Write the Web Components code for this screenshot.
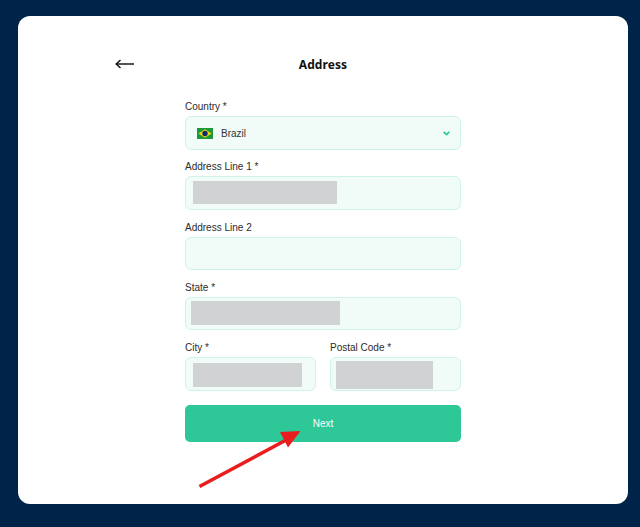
<!DOCTYPE html>
<html><head><meta charset="utf-8">
<style>
html,body{margin:0;height:100%;background:#00234a}
body{font-family:"Liberation Sans",Arial,sans-serif;overflow:hidden}
form-field.gap{margin-bottom:10.750px}
</style></head><body>
<address-page>
  <form-field class="gap" label="Country *"><country-select name="Brazil"></country-select></form-field>
  <form-field class="gap" label="Address Line 1 *"><text-box redact="8.500,5,144,23"></text-box></form-field>
  <form-field class="gap" label="Address Line 2"><text-box></text-box></form-field>
  <form-field class="gap" label="State *"><text-box redact="6.500,4.500,149,24"></text-box></form-field>
  <field-row>
    <form-field label="City *"><text-box redact="8.500,6,109,24"></text-box></form-field>
    <form-field label="Postal Code *"><text-box redact="6.500,4,97,28"></text-box></form-field>
  </field-row>
  <primary-button>Next</primary-button>
</address-page>
<script>
class AddressPage extends HTMLElement{constructor(){super();this.attachShadow({mode:'open'}).innerHTML=`
<style>
:host{display:block;box-sizing:border-box;height:100%;padding:16px 12px 23px 18px}
.card{position:relative;box-sizing:border-box;height:100%;background:#fff;border-radius:12px;padding:38px 0 0;display:flex;flex-direction:column;align-items:center}
header{position:relative;width:610px;display:flex;justify-content:center;height:22px;align-items:center}
h1{margin:0;font:700 12px/22px "Noto Sans",sans-serif;color:#111;letter-spacing:.1px}
.back{position:absolute;left:97px;top:3px;display:block}
main{width:276px;margin-top:24px;display:flex;flex-direction:column}
.arrow{position:absolute;left:178px;top:410px}
</style>
<div class="card">
<header><svg class="back" width="20" height="14" viewBox="0 0 20 14" fill="none" stroke="#1a1a1a"><path d="M1 7H19" stroke-width="1.500"/><path d="M5.500 3 1.200 7 5.500 11" stroke-width="1.500"/></svg><h1>Address</h1></header>
<main><slot></slot></main>
<svg class="arrow" width="112" height="72" viewBox="0 0 112 72"><path d="M3.500 60.500 92 13" stroke="#e81e1e" stroke-width="3.600" fill="none"/><path d="M84 6 104.500 5 92 21.500Z" fill="#e81e1e"/></svg>
</div>`}}
customElements.define('address-page',AddressPage);

class FormField extends HTMLElement{constructor(){super();this.attachShadow({mode:'open'}).innerHTML=`
<style>
:host{display:block;min-width:0}
label{display:block;font:400 10px/14px "Liberation Sans",Arial,sans-serif;color:#2b2b2b;margin-bottom:2px}
</style><label></label><slot></slot>`}
connectedCallback(){this.shadowRoot.querySelector('label').textContent=this.getAttribute('label')}}
customElements.define('form-field',FormField);

const boxCss=`:host{display:block;position:relative;box-sizing:border-box;height:33.500px;background:#f1fcf8;border:1.5px solid #cff3e8;border-radius:6px}`;

class TextBox extends HTMLElement{constructor(){super();this.attachShadow({mode:'open'}).innerHTML=`
<style>${boxCss}
.r{position:absolute;background:#d1d2d3}</style><div class="r" hidden></div>`}
connectedCallback(){const v=this.getAttribute('redact');if(!v)return;const [x,y,w,h]=v.split(',');const r=this.shadowRoot.querySelector('.r');r.hidden=false;r.style.cssText=`left:${x-1.5}px;top:${y-1.5}px;width:${w}px;height:${h}px`}}
customElements.define('text-box',TextBox);

class CountrySelect extends HTMLElement{constructor(){super();this.attachShadow({mode:'open'}).innerHTML=`
<style>${boxCss}
:host{display:flex;align-items:center;padding:1px 10px 0 10.500px;gap:8.500px;font:400 10px "Liberation Sans",Arial,sans-serif;color:#333}
span{flex:1}
</style>
<svg width="16" height="11" viewBox="0 0 16 11"><rect width="16" height="11" fill="#1c9a3a"/><path d="M8 1.300 14.500 5.500 8 9.700 1.500 5.500Z" fill="#f0d80c"/><circle cx="8" cy="5.500" r="2.700" fill="#14286e"/></svg>
<span></span>
<svg width="7" height="5" viewBox="0 0 7 5" fill="none" stroke="#2ec799" stroke-width="1.700"><path d="M.7 .8 3.500 3.600 6.300 .8"/></svg>`}
connectedCallback(){this.shadowRoot.querySelector('span').textContent=this.getAttribute('name')}}
customElements.define('country-select',CountrySelect);

class FieldRow extends HTMLElement{constructor(){super();this.attachShadow({mode:'open'}).innerHTML=`
<style>:host{display:grid;grid-template-columns:131px 131px;justify-content:space-between}</style><slot></slot>`}}
customElements.define('field-row',FieldRow);

class PrimaryButton extends HTMLElement{constructor(){super();this.attachShadow({mode:'open'}).innerHTML=`
<style>:host{display:flex;align-items:center;justify-content:center;height:36.500px;margin-top:14.500px;background:#2dc798;border-radius:5px;color:#fff;font:400 10px "Liberation Sans",Arial,sans-serif}</style><slot></slot>`}}
customElements.define('primary-button',PrimaryButton);
</script>
</body></html>
